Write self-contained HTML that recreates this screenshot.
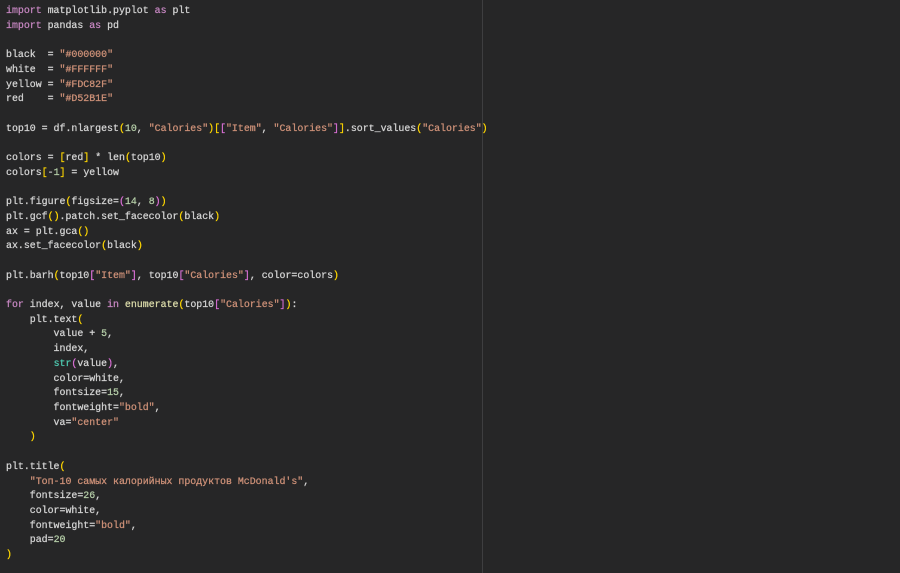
<!DOCTYPE html>
<html><head><meta charset="utf-8"><style>
html,body{margin:0;padding:0;background:#262627;width:900px;height:573px;overflow:hidden}
pre{margin:0;padding:4px 0 0 6px;font-family:"Liberation Mono","DejaVu Sans Mono",monospace;font-size:9.92px;line-height:14.7px;color:#d4d4d4;-webkit-text-stroke:0.25px currentColor;}
.r{position:absolute;left:482px;top:0;width:1px;height:573px;background:#3e3e40}
.k{color:#c586c0}.s{color:#ce9178}.n{color:#b5cea8}.f{color:#dcdcaa}.b{color:#4ec9b0}
.y{color:#ffd700}.p{color:#da70d6}.u{color:#179fff}
</style></head><body><div class="r"></div><pre><span class="k">import</span> matplotlib.pyplot <span class="k">as</span> plt
<span class="k">import</span> pandas <span class="k">as</span> pd

black  = <span class="s">"#000000"</span>
white  = <span class="s">"#FFFFFF"</span>
yellow = <span class="s">"#FDC82F"</span>
red    = <span class="s">"#D52B1E"</span>

top10 = df.nlargest<span class="y">(</span><span class="n">10</span>, <span class="s">"Calories"</span><span class="y">)[</span><span class="p">[</span><span class="s">"Item"</span>, <span class="s">"Calories"</span><span class="p">]</span><span class="y">]</span>.sort_values<span class="y">(</span><span class="s">"Calories"</span><span class="y">)</span>

colors = <span class="y">[</span>red<span class="y">]</span> * len<span class="y">(</span>top10<span class="y">)</span>
colors<span class="y">[</span>-<span class="n">1</span><span class="y">]</span> = yellow

plt.figure<span class="y">(</span>figsize=<span class="p">(</span><span class="n">14</span>, <span class="n">8</span><span class="p">)</span><span class="y">)</span>
plt.gcf<span class="y">()</span>.patch.set_facecolor<span class="y">(</span>black<span class="y">)</span>
ax = plt.gca<span class="y">()</span>
ax.set_facecolor<span class="y">(</span>black<span class="y">)</span>

plt.barh<span class="y">(</span>top10<span class="p">[</span><span class="s">"Item"</span><span class="p">]</span>, top10<span class="p">[</span><span class="s">"Calories"</span><span class="p">]</span>, color=colors<span class="y">)</span>

<span class="k">for</span> index, value <span class="k">in</span> <span class="f">enumerate</span><span class="y">(</span>top10<span class="p">[</span><span class="s">"Calories"</span><span class="p">]</span><span class="y">)</span>:
    plt.text<span class="y">(</span>
        value + <span class="n">5</span>,
        index,
        <span class="b">str</span><span class="p">(</span>value<span class="p">)</span>,
        color=white,
        fontsize=<span class="n">15</span>,
        fontweight=<span class="s">"bold"</span>,
        va=<span class="s">"center"</span>
    <span class="y">)</span>

plt.title<span class="y">(</span>
    <span class="s">"Топ-10 самых калорийных продуктов McDonald's"</span>,
    fontsize=<span class="n">26</span>,
    color=white,
    fontweight=<span class="s">"bold"</span>,
    pad=<span class="n">20</span>
<span class="y">)</span>
</pre></body></html>
